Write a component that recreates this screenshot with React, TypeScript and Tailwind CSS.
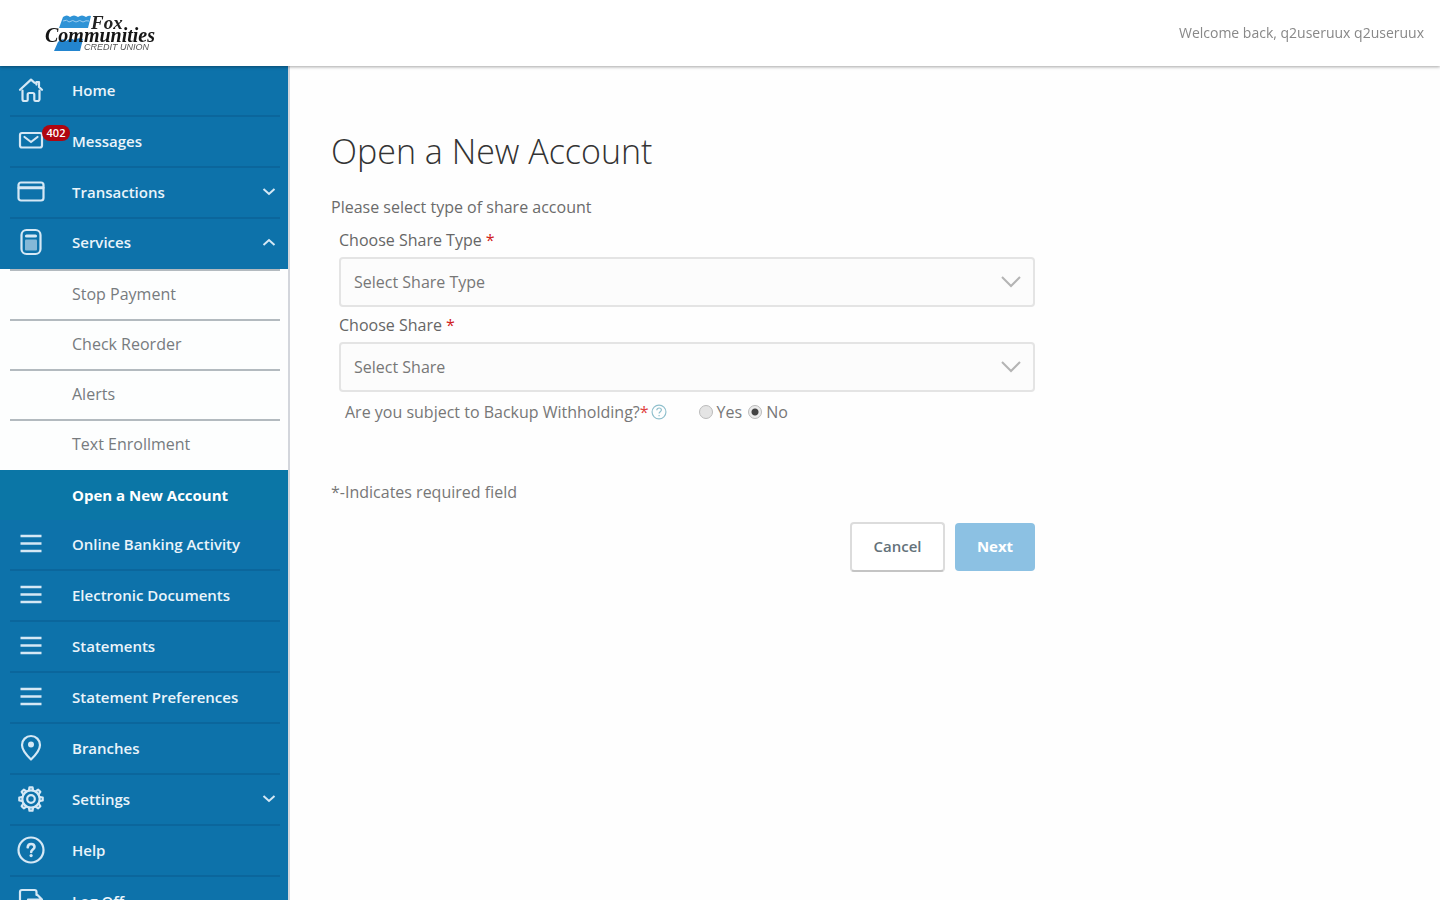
import { useState } from "react";
import type { ReactNode } from "react";

function Icon({ children }: { children: ReactNode }) {
  return (
    <svg
      viewBox="0 0 28 28"
      className="size-7 shrink-0"
      fill="none"
      stroke="currentColor"
      strokeWidth="2.2"
      strokeLinejoin="round"
      strokeLinecap="round"
      aria-hidden="true"
    >
      {children}
    </svg>
  );
}

const homeIcon = (
  <Icon>
    <path d="M5.5 14.5v8.7a1.8 1.8 0 0 0 1.8 1.8h2.2a1.2 1.2 0 0 0 1.2-1.2v-5.3a1.5 1.5 0 0 1 1.5-1.5h3.6a1.5 1.5 0 0 1 1.5 1.5v5.3a1.2 1.2 0 0 0 1.2 1.2h2.2a1.8 1.8 0 0 0 1.8-1.8v-8.7" />
    <path d="M3 13.8 14 3.6l3.5 3.2M25 13.8l-3-2.8V6h-2.6v2.6" />
  </Icon>
);
const mailIcon = (
  <Icon>
    <rect x="3" y="6" width="22" height="14.5" rx="2" />
    <path d="M7.5 10 14 15l6.5-5" />
  </Icon>
);
const cardIcon = (
  <Icon>
    <rect x="1.5" y="4.5" width="25" height="18" rx="2.5" />
    <path d="M2 9.8h24" strokeWidth="3" />
  </Icon>
);
const calculatorIcon = (
  <Icon>
    <rect x="4.5" y="2" width="19" height="24" rx="5" />
    <path d="M9.5 8h9" strokeWidth="3.2" />
    <rect x="8" y="11.5" width="12" height="11" rx="1" fill="currentColor" stroke="none" opacity="0.6" />
  </Icon>
);
const listIcon = (
  <Icon>
    <path d="M3.500 6h21M3.500 13.500h21M3.500 21h21" strokeWidth="2.6" strokeLinecap="butt" />
  </Icon>
);
const pinIcon = (
  <Icon>
    <path d="M14 25.5S5 16.800 5 11a9 9 0 0 1 18 0c0 5.800-9 14.500-9 14.500Z" />
    <circle cx="14" cy="10.500" r="3" fill="currentColor" stroke="none" />
  </Icon>
);
const gearTeeth = [0, 45, 90, 135, 180, 225, 270, 315];
const gearIcon = (
  <Icon>
    <circle cx="14" cy="14" r="8.700" />
    <circle cx="14" cy="14" r="3.800" />
    {gearTeeth.map((angle) => (
      <path key={angle} d="M12 5 12.500 2.300h3L16 5" transform={`rotate(${angle} 14 14)`} />
    ))}
  </Icon>
);
const helpIcon = (
  <Icon>
    <circle cx="14" cy="14" r="12.500" />
    <path
      d="M10.700 11.300c.2-2 1.500-3.300 3.400-3.300 2 0 3.400 1.200 3.400 3 0 2.500-3.300 2.500-3.300 5"
      strokeWidth="2.6"
    />
    <circle cx="14.100" cy="19.600" r="1.600" fill="currentColor" stroke="none" />
  </Icon>
);
const logOffIcon = (
  <Icon>
    <path d="M19.500 8V5a2 2 0 0 0-2-2H5a2 2 0 0 0-2 2v18a2 2 0 0 0 2 2h12.500a2 2 0 0 0 2-2v-2" />
    <path d="M11 12.500h14M20.500 8l4.500 4.500-4.500 4.500" />
  </Icon>
);

function Chevron({ up = false }: { up?: boolean }) {
  return (
    <svg viewBox="0 0 14 8" className="h-2 w-3.5" fill="none" stroke="#d5e8f5" strokeWidth="2" aria-hidden="true">
      {up ? <path d="m1.500 7 5.500-5 5.500 5" /> : <path d="m1.500 1 5.500 5 5.500-5" />}
    </svg>
  );
}

type Item = { label: string; icon: ReactNode; badge?: string; expands?: boolean };

const topItems: Item[] = [
  { label: "Home", icon: homeIcon },
  { label: "Messages", icon: mailIcon, badge: "402" },
  { label: "Transactions", icon: cardIcon, expands: true },
];
const serviceLinks = ["Stop Payment", "Check Reorder", "Alerts", "Text Enrollment"];
const lowerItems: Item[] = [
  { label: "Online Banking Activity", icon: listIcon },
  { label: "Electronic Documents", icon: listIcon },
  { label: "Statements", icon: listIcon },
  { label: "Statement Preferences", icon: listIcon },
  { label: "Branches", icon: pinIcon },
  { label: "Settings", icon: gearIcon, expands: true },
  { label: "Help", icon: helpIcon },
  { label: "Log Off", icon: logOffIcon },
];

function NavItem({ item }: { item: Item }) {
  const content = (
    <>
      <span className="relative flex w-[62px] shrink-0 pl-[7px] text-[#d5e8f5]">
        {item.icon}
        {item.badge && (
          <span className="absolute -top-0.5 left-8 flex h-4 w-7 items-center justify-center rounded-full bg-[#b00610] text-[11px] font-semibold text-white">
            {item.badge}
          </span>
        )}
      </span>
      <span className="flex-1 text-left">{item.label}</span>
      {item.expands && <Chevron />}
    </>
  );
  const row = "flex h-[51px] w-full items-center border-b-2 border-[#0b669c] pb-0.5 pr-1";
  return (
    <li className="pl-2.5 pr-2">
      {item.expands ? (
        <button type="button" className={row}>{content}</button>
      ) : (
        <a href="#" className={row}>{content}</a>
      )}
    </li>
  );
}

function Sidebar() {
  return (
    <nav
      aria-label="Main"
      className="w-[290px] shrink-0 overflow-y-auto border-r-2 border-[#d3d6dc] bg-[#0d72aa] text-[15px] leading-6 font-semibold text-[#eaf4fa] [scrollbar-width:none]"
    >
      <ul>
        {topItems.map((item) => (
          <NavItem key={item.label} item={item} />
        ))}
        <li>
          <button type="button" aria-expanded="true" className="flex h-[50px] w-full items-center pb-1 pl-2.5 pr-3">
            <span className="flex w-[62px] shrink-0 pl-[7px] text-[#d5e8f5]">{calculatorIcon}</span>
            <span className="flex-1 text-left">Services</span>
            <Chevron up />
          </button>
          <ul className="bg-[#fdfefe] pb-px text-base font-normal text-[#777b7e]">
            {serviceLinks.map((label) => (
              <li key={label} className="pl-2.5 pr-2">
                <a href="#" className="flex h-[50px] items-center border-t-2 border-[#b3babf] pb-0.5 pl-[62px]">
                  {label}
                </a>
              </li>
            ))}
          </ul>
          <a href="#" aria-current="page" className="flex h-[50px] items-center bg-[#0b76a6] pl-[72px] font-bold text-white">
            Open a New Account
          </a>
        </li>
        {lowerItems.map((item) => (
          <NavItem key={item.label} item={item} />
        ))}
      </ul>
    </nav>
  );
}

function Logo() {
  return (
    <svg viewBox="0 0 114 40" className="h-10 w-[114px]" role="img" aria-label="Fox Communities Credit Union">
      <path d="M20 4q4-3 7 0 4-3 8 0 4-3 8 0 3-2 5-1l-3 12H16Z" fill="#2f93d6" />
      <path d="M20 8q4-2 6 1 4-3 7 0 4-3 7 0 3-2 6-1" fill="none" stroke="#9ccdf0" strokeWidth="1" />
      <path d="M15 29q5-5 8-1 5-4 8-1 4-3 9-1l-3 12H11Z" fill="#2385cf" />
      <g fontFamily="Liberation Serif, serif" fontStyle="italic" fontWeight="700">
        <text x="48" y="16" fontSize="19" fill="#222">Fox</text>
        <text x="2" y="29" fontSize="20" fill="#151515">Communities</text>
      </g>
      <text x="41" y="37" fontSize="9" fontFamily="Liberation Sans, sans-serif" fontStyle="italic" fill="#555">CREDIT UNION</text>
    </svg>
  );
}

function ShareSelect({ id, label, placeholder }: { id: string; label: string; placeholder: string }) {
  return (
    <div>
      <label htmlFor={id} className="block h-[29px] text-base leading-6 font-medium text-[#666]">
        {label} <span className="text-[#d02020]">*</span>
      </label>
      <div className="grid items-center">
        <select
          id={id}
          className="col-start-1 row-start-1 h-[50px] w-full appearance-none rounded-sm border-2 border-[#e4e4e4] bg-[#fcfcfc] px-[13px] text-base text-[#777]"
        >
          <option>{placeholder}</option>
        </select>
        <svg
          viewBox="0 0 22 14"
          className="pointer-events-none col-start-1 row-start-1 mr-[13px] h-3.5 w-[22px] justify-self-end"
          fill="none"
          stroke="#b4b4b4"
          strokeWidth="2"
          aria-hidden="true"
        >
          <path d="m2 2 9 9 9-9" />
        </svg>
      </div>
    </div>
  );
}

function Choice({ label, checked, onChange }: { label: string; checked: boolean; onChange: () => void }) {
  return (
    <label className="flex items-center gap-1 font-medium">
      <input
        type="radio"
        name="withholding"
        checked={checked}
        onChange={onChange}
        className="size-3.5 appearance-none rounded-full border border-[#bbb] bg-[#e4e4e4] checked:bg-[radial-gradient(circle,#444_0_3px,#ececec_4px)]"
      />
      {label}
    </label>
  );
}

function AccountForm() {
  const [subject, setSubject] = useState(false);
  return (
    <form className="max-w-[704px] text-base leading-6 text-[#777]" onSubmit={(e) => e.preventDefault()}>
      <h1 className="text-[34px] leading-12 font-light text-[#333]">Open a New Account</h1>
      <p className="mt-5 font-medium text-[#6b6b6b]">Please select type of share account</p>
      <div className="mt-[9px] flex flex-col gap-1.5 pl-2">
        <ShareSelect id="share-type" label="Choose Share Type" placeholder="Select Share Type" />
        <ShareSelect id="share" label="Choose Share" placeholder="Select Share" />
      </div>
      <div role="radiogroup" aria-labelledby="withholding-label" className="mt-2 flex items-center pl-3.5">
        <span id="withholding-label">
          Are you subject to Backup Withholding?<span className="text-[#e04040]">*</span>
        </span>
        <button type="button" aria-label="About backup withholding" className="ml-0.5 text-[#8fbfcc]">
          <svg viewBox="0 0 18 18" className="size-4" fill="none" stroke="currentColor" strokeWidth="1.3" aria-hidden="true">
            <circle cx="9" cy="9" r="7.800" />
            <path d="M6.500 7c.2-1.700 1.200-2.500 2.600-2.500 1.500 0 2.600.9 2.600 2.200 0 1.900-2.600 2-2.600 4M9.100 12.300v1.500" />
          </svg>
        </button>
        <div className="ml-8 flex gap-1.5">
          <Choice label="Yes" checked={subject} onChange={() => setSubject(true)} />
          <Choice label="No" checked={!subject} onChange={() => setSubject(false)} />
        </div>
      </div>
      <p className="mt-14">*-Indicates required field</p>
      <div className="mt-[18px] flex items-center justify-end gap-2.5 text-[15px] font-semibold">
        <button type="button" className="h-[50px] w-[95px] rounded-sm border-2 border-[#dcdcdc] border-b-[#c4c4c4] bg-white pb-0.5 text-[#64727a]">
          Cancel
        </button>
        <button type="submit" className="h-12 w-20 rounded-sm bg-[#8cc1e3] pb-0.5 font-bold text-white">
          Next
        </button>
      </div>
    </form>
  );
}

export default function App() {
  return (
    <div className="flex h-screen flex-col overflow-hidden bg-[#fefefe] font-['Open_Sans',sans-serif]">
      <header className="z-10 flex h-[66px] shrink-0 items-center justify-between bg-white pl-[43px] pr-4 shadow-[0_1px_3px_rgba(0,0,0,0.35)]">
        <a href="#">
          <Logo />
        </a>
        <p className="text-sm text-[#888]">Welcome back, q2useruux q2useruux</p>
      </header>
      <div className="flex min-h-0 flex-1">
        <Sidebar />
        <main className="min-w-0 flex-1 overflow-y-auto px-[41px] pt-[61px]">
          <AccountForm />
        </main>
      </div>
    </div>
  );
}
